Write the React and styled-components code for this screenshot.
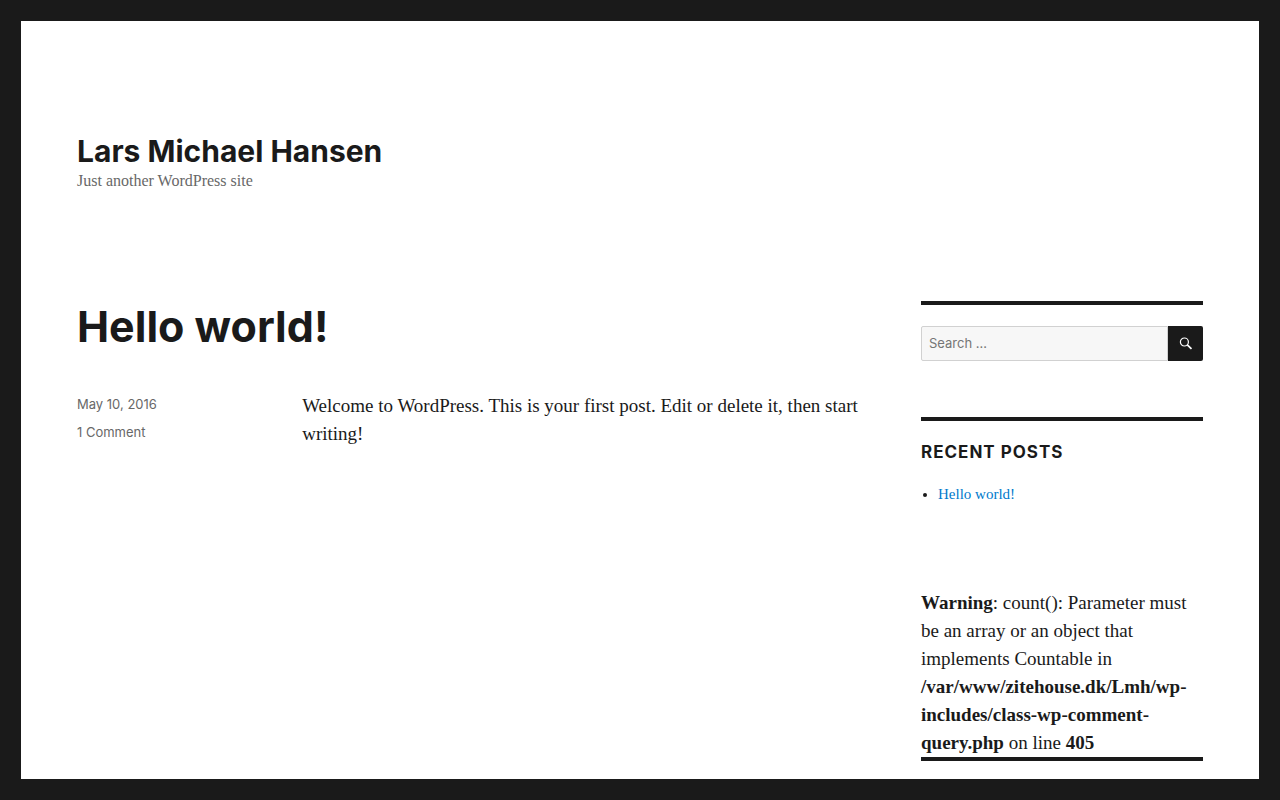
import React from 'react';
import styled, { createGlobalStyle } from 'styled-components';

const sans = `Inter, 'Open Sans', sans-serif`;
const serif = `'Liberation Serif', 'Noto Serif', serif`;

const GlobalStyle = createGlobalStyle`
  *, *::before, *::after {
    box-sizing: border-box;
  }
  body {
    margin: 0;
    padding: 21px;
    background: #1a1a1a;
    color: #1a1a1a;
    font-family: ${serif};
    font-size: 19px;
    line-height: 28px;
  }
`;

const Site = styled.div`
  min-height: calc(100vh - 42px);
  padding: 0 56px;
  background: #fff;
`;

const Header = styled.header`
  padding: 112px 0;
`;

const SiteTitle = styled.h1`
  margin: 0;
  font: 700 30px/36px ${sans};
`;

const Tagline = styled.p`
  margin: 4px 0 0;
  color: #686868;
  font-size: 16px;
  line-height: 16px;
`;

const Content = styled.div`
  display: flex;
  justify-content: space-between;
`;

const Main = styled.main`
  width: 70%;
`;

const PostTitle = styled.h2`
  margin: 0 0 41px;
  font: 700 43px/50px ${sans};
`;

const PostBody = styled.div`
  display: grid;
  grid-template-columns: 2fr 5fr;
`;

const Meta = styled.footer`
  display: flex;
  flex-direction: column;
  align-items: flex-start;
  gap: 4px;
  font: 400 13px/24px ${sans};
`;

const MetaLink = styled.a`
  color: #686868;
  text-decoration: none;
`;

const Text = styled.p`
  margin: 0;
`;

const Sidebar = styled.aside`
  display: flex;
  flex-direction: column;
  width: 282px;
`;

const Widget = styled.section`
  padding-top: ${({ $empty }) => ($empty ? 0 : '21px')};
  border-top: 4px solid #1a1a1a;
  margin-bottom: ${({ $empty }) => ($empty ? 0 : '56px')};
`;

const WidgetTitle = styled.h2`
  margin: 0 0 21px;
  font: 700 17px/21px ${sans};
  letter-spacing: 1px;
  text-transform: uppercase;
`;

const PostList = styled.ul`
  margin: 0;
  padding: 0 0 28px 17px;
  font-size: 15px;
  line-height: 21px;
`;

const PostLink = styled.a`
  color: #007acc;
  text-decoration: none;
`;

const SearchForm = styled.form`
  display: flex;
  height: 35px;
`;

const SearchInput = styled.input`
  flex: 1;
  min-width: 0;
  padding: 0 7px 2px;
  border: 1px solid #d1d1d1;
  border-radius: 2px 0 0 2px;
  background: #f7f7f7;
  color: #686868;
  font: 400 13px/18px ${sans};

  &::placeholder {
    color: #757575;
    opacity: 1;
  }
`;

const SearchButton = styled.button`
  display: flex;
  align-items: center;
  justify-content: center;
  width: 35px;
  padding: 0;
  border: 0;
  border-radius: 0 2px 2px 0;
  background: #1a1a1a;
  color: #fff;
`;

const SearchIcon = () => (
  <svg width="16" height="16" viewBox="0 0 16 16" fill="none" stroke="currentColor" aria-hidden="true">
    <circle cx="6.4" cy="6" r="4" strokeWidth="1.2" />
    <path d="M9.3 8.8 L13.5 12.8" strokeWidth="1.7" />
  </svg>
);

const App = () => (
  <>
    <GlobalStyle />
    <Site>
      <Header>
        <SiteTitle>Lars Michael Hansen</SiteTitle>
        <Tagline>Just another WordPress site</Tagline>
      </Header>
      <Content>
        <Main>
          <article>
            <PostTitle>Hello world!</PostTitle>
            <PostBody>
              <Meta>
                <MetaLink href="#post">May 10, 2016</MetaLink>
                <MetaLink href="#comments">1 Comment</MetaLink>
              </Meta>
              <Text>
                Welcome to WordPress. This is your first post. Edit or delete it, then start writing!
              </Text>
            </PostBody>
          </article>
        </Main>
        <Sidebar>
          <Widget>
            <SearchForm role="search">
              <SearchInput type="search" placeholder="Search …" aria-label="Search for" />
              <SearchButton type="submit" aria-label="Search">
                <SearchIcon />
              </SearchButton>
            </SearchForm>
          </Widget>
          <Widget>
            <WidgetTitle>Recent Posts</WidgetTitle>
            <PostList>
              <li>
                <PostLink href="#post">Hello world!</PostLink>
              </li>
            </PostList>
          </Widget>
          <Text>
            <b>Warning</b>: count(): Parameter must be an array or an object that implements Countable in{' '}
            <b>/var/www/zitehouse.dk/Lmh/wp-includes/class-wp-comment-query.php</b> on line <b>405</b>
          </Text>
          <Widget $empty />
        </Sidebar>
      </Content>
    </Site>
  </>
);

export default App;
